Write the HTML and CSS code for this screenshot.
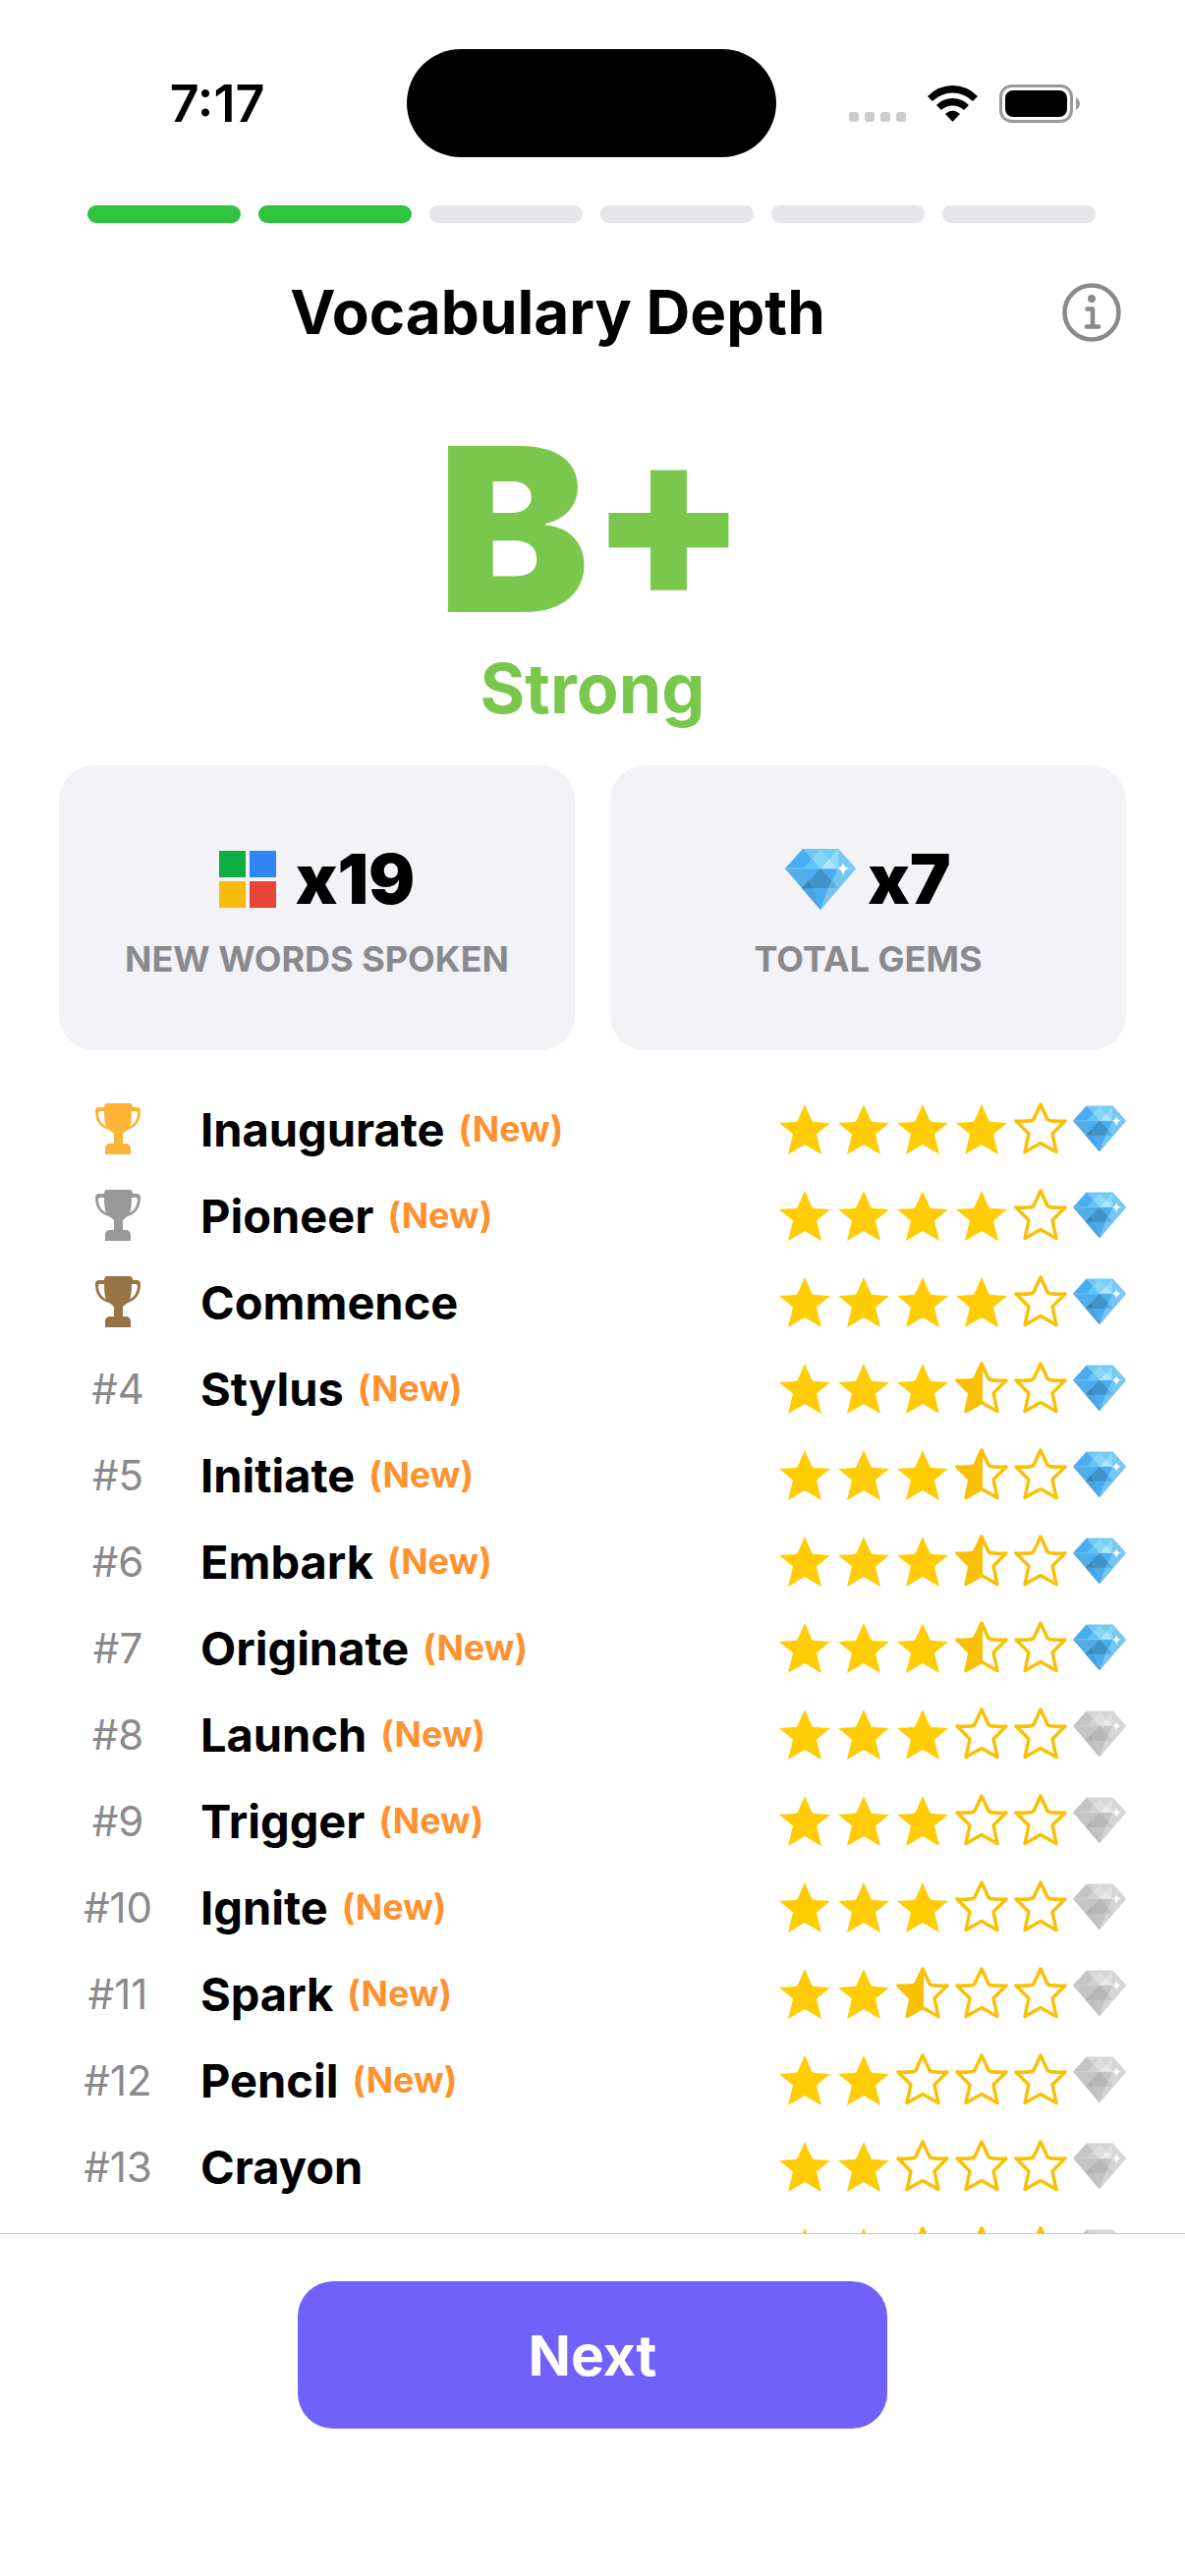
FILE: index.html
```html
<!DOCTYPE html>
<html lang="en">
<head>
<meta charset="utf-8">
<meta name="viewport" content="width=device-width, initial-scale=1">
<title>Vocabulary Depth</title>
<link rel="stylesheet" href="styles.css">
<script src="app.js" defer></script>
</head>
<body>
<svg class="sprite" aria-hidden="true">
  <symbol id="star-full" viewBox="0 0 54 54">
    <path fill="#ffcc05" d="M27 2 34 18Q35 20 37 20L53 21 39 32.500 44 53 27 43 10 53 15 32.500 1 21 17 20Q19 20 20 18Z"/>
  </symbol>
  <symbol id="star-empty" viewBox="0 0 54 54">
    <path fill="none" stroke="#f9c006" stroke-width="3.500" stroke-linejoin="round" d="M27 2 33 15Q34 18.500 37 18.800 45 19.700 52 19L39 32 43 50.500 27 41.500 11 50.500 15 32 2 19Q9 19.700 17 18.800 20 18.500 21 15Z"/>
  </symbol>
  <symbol id="star-half" viewBox="0 0 54 54">
    <use href="#star-empty"/>
    <path fill="#f9c006" d="M28 2V41L11 50.500 15 32 2 19Q9 19.700 17 18.800 20 18.500 21 15Z"/>
  </symbol>
  <symbol id="gem" viewBox="0 0 72 62">
    <path fill="#4aacf2" d="M18 0H54L72 20 36 62 0 20Z"/>
    <path fill="#74c8f2" d="M18 0H36L27 10Z"/>
    <path fill="#5ec4f5" d="M27 10 36 20H18Z"/>
    <path fill="#86d8f7" d="M36 0 45 10 36 20 27 10Z"/>
    <path fill="#74cdf4" d="M36 0H54L45 10Z"/>
    <path fill="#8fdcf9" d="M54 0V20L45 10Z"/>
    <path fill="#b4e5fa" d="M45 10 54 20H36Z"/>
    <path fill="#78caf4" d="M54 0 72 20H54Z"/>
    <path fill="#54ade6" d="M0 20H18L24 33 18 40Z"/>
    <path fill="#3f82b3" d="M24 32 28 40H17Z"/>
    <path fill="#4aa2de" d="M17 40H28L36 62Z"/>
    <path fill="#3f93c6" d="M36 20 48 33 44 40H28L24 33Z"/>
    <path fill="#76c6f3" d="M54 20H72L36 62 44 40Z"/>
    <path fill="#5aaee0" d="M48 32 54 40H44Z"/>
    <path fill="none" stroke="#a3dcf8" stroke-opacity=".6" d="M0 20H72"/>
    <path fill="#fff" d="M59 14Q60 19 65 20 60 21 59 27 58 21 53 20 58 19 59 14Z"/>
  </symbol>
  <symbol id="trophy" viewBox="0 0 46 52">
    <path fill="currentColor" d="M12 0H35Q38 0 38 4H42Q46 4 46 8C46 18 41 25 33 27Q30 29 28 31V41H32Q36 42 36 46V52H10V46Q10 42 14 41H19V31Q17 29 14 27C5 25 0 18 0 8Q0 4 4 4H9Q9 0 12 0ZM9 8H5Q3 8 3 11 4 20 11 23.500 9 19 9 8ZM37 8Q37 19 35 23.500 42 20 43 11 43 8 41 8Z"/>
  </symbol>
</svg>

<div class="screen">
  <div class="status">
    <span class="time">7:17</span>
    <span class="island"></span>
    <span class="indicators">
      <svg class="signal" viewBox="0 0 58 10" fill="#ccc"><rect width="10" height="10" rx="3"/><rect x="16" width="10" height="10" rx="3"/><rect x="32" width="10" height="10" rx="3"/><rect x="48" width="10" height="10" rx="3"/></svg>
      <svg class="wifi" viewBox="0 0 51 37"><path d="M0 11Q11 0 25.500 0T51 11L46 16Q37 7.500 25.500 7.500T5 16ZM9 20Q16 13 25.500 13T42 20L37 25Q32 20.500 25.500 20.500T14 25ZM18 29Q25.500 22 33 29L25.500 37Z"/></svg>
      <svg class="battery" viewBox="0 0 82 39"><rect x="1.500" y="1.500" width="72" height="36" rx="11" fill="none" stroke="#999" stroke-width="3"/><rect x="6" y="6" width="63" height="27" rx="8"/><path fill="#999" d="M78 13Q82 16 82 19.500T78 26Z"/></svg>
    </span>
  </div>

  <div class="steps" role="progressbar" aria-label="Progress" aria-valuemin="0" aria-valuemax="6" aria-valuenow="2">
    <span class="step done"></span><span class="step done"></span><span class="step"></span><span class="step"></span><span class="step"></span><span class="step"></span>
  </div>

  <header class="header">
    <h1 class="title">Vocabulary Depth</h1>
    <button class="info" type="button" aria-label="Info">
      <svg viewBox="0 0 60 60"><circle cx="30" cy="30" r="27.500" fill="none" stroke="#8a8a8e" stroke-width="4.500"/><circle cx="30" cy="16" r="4" fill="#8a8a8e"/><path fill="none" stroke="#8a8a8e" stroke-width="4.500" stroke-linecap="round" stroke-linejoin="round" d="M25.500 26.500H31V44M25 44.500H37"/></svg>
    </button>
  </header>

  <section class="result">
    <p class="grade">B+</p>
    <p class="verdict">Strong</p>
  </section>

  <section class="cards">
    <div class="card">
      <p class="figure"><svg class="tiles" viewBox="0 0 58 58"><path fill="#10ad42" d="M0 0H27V27H0Z"/><path fill="#3085f2" d="M31 0H58V27H31Z"/><path fill="#f7bc0b" d="M0 31H27V58H0Z"/><path fill="#e94536" d="M31 31H58V58H31Z"/></svg>x19</p>
      <p class="caption">NEW WORDS SPOKEN</p>
    </div>
    <div class="card">
      <p class="figure gems"><svg class="big-gem"><use href="#gem"/></svg>x7</p>
      <p class="caption">TOTAL GEMS</p>
    </div>
  </section>

  <ol class="words" id="words"></ol>

  <footer class="footer">
    <button class="next" type="button">Next</button>
  </footer>
</div>
</body>
</html>
```
FILE: styles.css
```css
* {
  box-sizing: border-box;
}

body {
  margin: 0;
  background: #fff;
  color: #000;
  font-family: Inter, "Liberation Sans", sans-serif;
}

h1, p, ol {
  margin: 0;
  padding: 0;
}

svg {
  display: block;
  flex: none;
}

button {
  padding: 0;
  border: 0;
  background: none;
  font: inherit;
}

.sprite {
  position: absolute;
  width: 0;
  height: 0;
}

.screen {
  display: flex;
  flex-direction: column;
  height: 100vh;
}

.status {
  display: grid;
  grid-template-columns: 1fr 376px 1fr;
  align-items: center;
  padding: 50px 2px 0 0;
}

.time {
  justify-self: center;
  padding-left: 28px;
  font-size: 52px;
  font-weight: 600;
}

.island {
  height: 110px;
  border-radius: 55px;
  background: #000;
}

.indicators {
  display: flex;
  align-items: center;
  gap: 22px;
  padding-left: 74px;
}

.signal {
  width: 58px;
  height: 10px;
  margin-top: 28px;
}

.wifi {
  width: 51px;
  height: 37px;
}

.battery {
  width: 82px;
  height: 39px;
}

.steps {
  display: flex;
  gap: 18px;
  padding: 49px 91px 0 89px;
}

.step {
  flex: 1;
  height: 18px;
  border-radius: 9px;
  background: #e5e5ea;
}

.step.done {
  background: #30c340;
}

.header {
  display: flex;
  align-items: center;
  margin-top: 51px;
  padding: 0 65px 0 54px;
}

.title {
  flex: 1;
  font-size: 62px;
  font-weight: 700;
  line-height: 80px;
  text-align: center;
}

.info svg {
  width: 60px;
  height: 60px;
}

.result {
  color: #79c84d;
  text-align: center;
}

.grade {
  margin-top: 61px;
  font-size: 232px;
  font-weight: 900;
  line-height: 240px;
}

.verdict {
  font-size: 70px;
  font-weight: 700;
  line-height: 84px;
}

.cards {
  display: grid;
  grid-template-columns: 1fr 1fr;
  gap: 36px;
  margin-top: 36px;
  padding: 0 60px;
}

.card {
  padding: 72px 0 70px;
  border-radius: 36px;
  background: #f2f2f7;
}

.figure {
  display: flex;
  align-items: center;
  justify-content: center;
  gap: 20px;
  font-size: 70px;
  font-weight: 900;
  line-height: 88px;
}

.figure.gems {
  gap: 12px;
}

.tiles {
  width: 58px;
  height: 58px;
}

.big-gem {
  width: 72px;
  height: 62px;
}

.caption {
  margin-top: 14px;
  color: #8a8a8e;
  font-size: 36px;
  font-weight: 700;
  line-height: 46px;
  text-align: center;
}

.words {
  flex: 1;
  min-height: 0;
  margin-top: 36px;
  padding: 0 60px;
  overflow: hidden;
  list-style: none;
}

.word {
  display: flex;
  align-items: center;
  height: 88px;
}

.rank {
  display: flex;
  justify-content: center;
  width: 120px;
  margin-right: 24px;
  color: #8a8a8e;
  font-size: 42px;
}

.trophy {
  width: 46px;
  height: 52px;
}

.gold { color: #fcb435; }
.silver { color: #999; }
.bronze { color: #967446; }

.name {
  display: flex;
  flex: 1;
  align-items: center;
  gap: 14px;
  font-size: 47px;
  font-weight: 700;
}

.new {
  color: #ff9230;
  font-size: 36px;
}

.score {
  display: flex;
  align-items: center;
  gap: 6px;
}

.star {
  width: 54px;
  height: 54px;
}

.gem {
  width: 54px;
  height: 48px;
}

.gem.off {
  filter: grayscale(1) opacity(.6);
}

.footer {
  display: flex;
  justify-content: center;
  padding: 48px 0 150px;
  border-top: 1px solid #c6c6c8;
}

.next {
  width: 600px;
  max-width: 90%;
  height: 150px;
  border-radius: 36px;
  background: #6f61fa;
  color: #fff;
  font-size: 57px;
  font-weight: 700;
}
```
FILE: app.js
```js
const words = [
  ["Inaugurate", true, 4, true],
  ["Pioneer", true, 4, true],
  ["Commence", false, 4, true],
  ["Stylus", true, 3.5, true],
  ["Initiate", true, 3.5, true],
  ["Embark", true, 3.5, true],
  ["Originate", true, 3.5, true],
  ["Launch", true, 3, false],
  ["Trigger", true, 3, false],
  ["Ignite", true, 3, false],
  ["Spark", true, 2.5, false],
  ["Pencil", true, 2, false],
  ["Crayon", false, 2, false],
  ["", false, 2, false]
];
const medals = ["gold", "silver", "bronze"];

function starKind(score, position) {
  if (score >= position) return "full";
  return score >= position - 0.5 ? "half" : "empty";
}

document.getElementById("words").innerHTML = words.map(([name, isNew, score, gem], i) => {
  const rank = i < 3
    ? `<svg class="trophy ${medals[i]}"><use href="#trophy"/></svg>`
    : name && `#${i + 1}`;
  const stars = [1, 2, 3, 4, 5]
    .map(n => `<svg class="star"><use href="#star-${starKind(score, n)}"/></svg>`).join("");
  return `<li class="word"><span class="rank">${rank}</span>` +
    `<span class="name">${name}${isNew ? '<span class="new">(New)</span>' : ""}</span>` +
    `<span class="score">${stars}<svg class="gem${gem ? "" : " off"}"><use href="#gem"/></svg></span></li>`;
}).join("");
```
